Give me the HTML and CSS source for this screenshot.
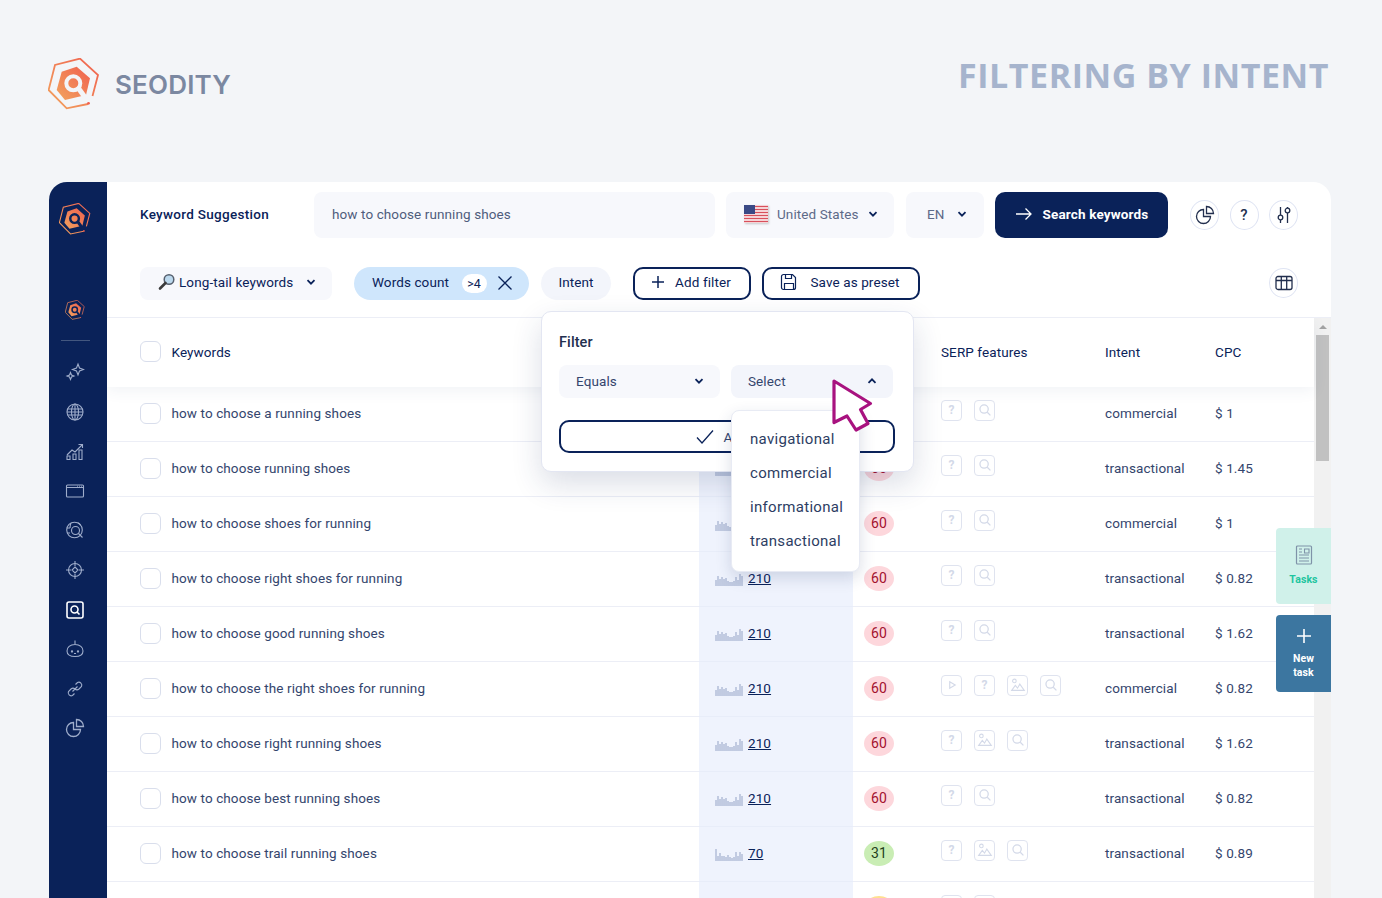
FILE: index.html
```html
<!DOCTYPE html>
<html lang="en">
<head>
  <meta charset="UTF-8" />
  <meta name="viewport" content="width=device-width, initial-scale=1.0"/>
  <title>Seodity - Filtering by intent</title>
  <link rel="stylesheet" href="styles.css">
</head>
<body>

  <svg class="defs" width="0" height="0">
    <defs>
      <linearGradient id="logoGrad" x1="0" y1="1" x2="1" y2="0">
        <stop offset="0" stop-color="#f2a35e"/>
        <stop offset="1" stop-color="#f0604f"/>
      </linearGradient>
      <symbol id="logo" viewBox="0 0 52 52">
        <path d="M40 46 18.7 50.3.6 32 7 7 32 .6 50 17l-5.500 21" fill="none" stroke="url(#logoGrad)" stroke-width="1.800"/>
        <path d="M28.700 8.700 42 20.300 38 37 17 42 8.700 32 13.700 13.700z" fill="url(#logoGrad)"/>
        <circle cx="25.300" cy="25.300" r="7" fill="none" stroke="var(--knock)" stroke-width="4"/>
        <path d="M31 31l6.500 9" stroke="var(--knock)" stroke-width="5"/>
        <circle cx="40.500" cy="45.300" r="1.400" fill="#f0604f"/>
      </symbol>
      <symbol id="chev" viewBox="0 0 10 10"><path d="M1.500 3.200 5 6.700l3.500-3.500" fill="none" stroke="currentColor" stroke-width="1.800"/></symbol>
      <symbol id="pie" viewBox="0 0 20 20"><path d="M8.500 4.500A7 7 0 1 0 15.500 11.500H8.500zM11.500 1.500a7 7 0 0 1 7 7h-7z" fill="none" stroke="currentColor" stroke-width="1.300"/></symbol>
      <symbol id="s-search" viewBox="0 0 20 20"><circle cx="9" cy="9" r="4.600" fill="none" stroke="currentColor" stroke-width="1.400"/><path d="M12.500 12.500l3.500 3.500" stroke="currentColor" stroke-width="1.400"/></symbol>
      <symbol id="s-image" viewBox="0 0 20 20"><circle cx="6" cy="5.500" r="2" fill="none" stroke="currentColor" stroke-width="1.200"/><path d="M3 16l4-5.500 2.500 3L12 9l5 7z" fill="none" stroke="currentColor" stroke-width="1.200"/></symbol>
      <symbol id="s-play" viewBox="0 0 20 20"><path d="M7.500 6.500v7l6-3.500z" fill="none" stroke="currentColor" stroke-width="1.300"/></symbol>
      <symbol id="spark-a" viewBox="0 0 28 12"><path d="M1 12V6M3 12V2M5 12V5M7 12V3M9 12V5M11 12V4M13 12V7M15 12V8M17 12V8M19 12V7M21 12V3M23 12V6M25 12V0M27 12V2" stroke="#94a3c6" stroke-width="1"/></symbol>
      <symbol id="spark-b" viewBox="0 0 28 12"><path d="M1 12V0M3 12V7M5 12V4M7 12V7M9 12V7M11 12V8M13 12V6M15 12V8M17 12V9M19 12V8M21 12V3M23 12V7M25 12V3M27 12V5" stroke="#94a3c6" stroke-width="1"/></symbol>
    </defs>
  </svg>

  <header class="page-head">
    <div class="brand">
      <svg class="brand-logo"><use href="#logo"/></svg>
      <span class="brand-name">SEODITY</span>
    </div>
    <h1 class="page-title">FILTERING BY INTENT</h1>
  </header>

  <div class="app">
    <nav class="sidebar">
      <svg class="side-logo"><use href="#logo"/></svg>
      <svg class="side-logo-small"><use href="#logo"/></svg>
      <div class="side-line"></div>
      <div class="side-icons">
        <svg viewBox="0 0 20 20"><path d="M13 2l1.500 4 4 1.500-4 1.500-1.500 4-1.500-4-4-1.500 4-1.500zM5.500 10.500l1 2.500 2.500 1-2.500 1-1 2.500-1-2.500-2.500-1 2.500-1z"/></svg>
        <svg viewBox="0 0 20 20"><circle cx="10" cy="10" r="8"/><ellipse cx="10" cy="10" rx="3.500" ry="8"/><path d="M10 2v16M2.500 7h15M2.500 13h15M2 10h16"/></svg>
        <svg viewBox="0 0 20 20"><path d="M2 14l5-5 3 2 7-7M13.500 3.500H17.500V7M2 15h3v3.500H2zM8 13h3v5.500H8zM14 9h3v9.500h-3z"/></svg>
        <svg viewBox="0 0 20 20"><rect x="1.500" y="4" width="17" height="12" rx="1"/><path d="M1.500 6.500h17M12 5.200h.8M14 5.200h.8M16 5.200h.8"/></svg>
        <svg viewBox="0 0 20 20"><circle cx="9.500" cy="10" r="7.800"/><path d="M2 8h3M2 13h3M6 3c-1 2-1 4-1 5M13 2.800c1 .6 2 1.500 2.500 2.500"/><circle cx="10.500" cy="10.500" r="4"/><path d="M13.500 13.500l4 4"/></svg>
        <svg viewBox="0 0 20 20"><circle cx="10" cy="10" r="6.500"/><path d="M10 7l3 3-3 3-3-3zM10 1v5M10 14v5M1 10h5M14 10h5"/></svg>
        <svg class="side-active" viewBox="0 0 20 20"><rect x="2" y="2" width="16" height="16" rx="2"/><circle cx="9.500" cy="9.500" r="3.500"/><path d="M12 12l2.500 2.500"/></svg>
        <svg viewBox="0 0 20 20"><path d="M10 1.500v4M10 5.500c5 0 8 3 8 6.500s-3 5.500-8 5.500-8-2-8-5.500 3-6.500 8-6.500z"/><circle cx="7" cy="12.500" r=".6"/><circle cx="13" cy="12.500" r=".6"/><path d="M9 14.500h2"/></svg>
        <svg viewBox="0 0 20 20"><path d="M7.500 12.500l5-5M10.500 5.500l2-2a3 3 0 0 1 4 4l-2.500 2.500a3 3 0 0 1-4 0M9.500 14.500l-2 2a3 3 0 0 1-4-4L6 10a3 3 0 0 1 4 0"/></svg>
        <svg viewBox="0 0 20 20"><use href="#pie"/></svg>
      </div>
    </nav>

    <main class="content">
      <section class="topbar">
        <div class="tool-name">Keyword Suggestion</div>
        <div class="query">how to choose running shoes</div>
        <div class="select country">
          <svg class="flag" viewBox="0 0 24 18">
            <rect width="24" height="18" fill="#fff"/>
            <path d="M0 1.500h24M0 4.500h24M0 7.500h24M0 10.500h24M0 13.500h24M0 16.500h24" stroke="#d8505c" stroke-width="1.500"/>
            <rect width="11" height="9" fill="#3b4a86"/>
          </svg>
          <span>United States</span>
          <svg class="chev"><use href="#chev"/></svg>
        </div>
        <div class="select lang">
          <span>EN</span>
          <svg class="chev"><use href="#chev"/></svg>
        </div>
        <button class="search-btn">
          <svg width="18" height="14" viewBox="0 0 18 14"><path d="M1 7h15M10.500 1.500 16 7l-5.500 5.500" fill="none" stroke="#fff" stroke-width="1.300"/></svg>
          Search keywords
        </button>
        <div class="round-btns">
          <div class="round-btn"><svg width="20" height="20"><use href="#pie"/></svg></div>
          <div class="round-btn">?</div>
          <div class="round-btn">
            <svg width="20" height="20" viewBox="0 0 20 20"><path d="M6.500 2v8M6.500 15v3M13.500 2v1M13.500 8v10" fill="none" stroke="currentColor" stroke-width="1.300"/><circle cx="6.500" cy="12.500" r="2.300" fill="none" stroke="currentColor" stroke-width="1.300"/><circle cx="13.500" cy="5.500" r="2.300" fill="none" stroke="currentColor" stroke-width="1.300"/></svg>
          </div>
        </div>
      </section>

      <section class="filterbar">
        <div class="select longtail">
          <svg width="18" height="18" viewBox="0 0 18 18"><circle cx="11" cy="6.500" r="4.800" fill="#bcd9ee" stroke="#56606e" stroke-width="1.500"/><path d="M7.500 10 2 15.500" stroke="#3b3b3b" stroke-width="2.600" stroke-linecap="round"/></svg>
          <span>Long-tail keywords</span>
          <svg class="chev"><use href="#chev"/></svg>
        </div>
        <div class="pill pill-blue">
          <span>Words count</span>
          <span class="pill-value">&gt;4</span>
          <svg width="16" height="16" viewBox="0 0 16 16"><path d="M1.500 1.500l13 13M14.500 1.500l-13 13" stroke="#0a2259" stroke-width="1.300"/></svg>
        </div>
        <div class="pill pill-grey">Intent</div>
        <button class="outline-btn add-btn">
          <svg width="14" height="14" viewBox="0 0 14 14"><path d="M7 1v12M1 7h12" stroke="#0a2259" stroke-width="1.500"/></svg>
          Add filter
        </button>
        <button class="outline-btn save-btn">
          <svg width="18" height="18" viewBox="0 0 18 18"><path d="M3.500 1.500h9l3 3v10a2 2 0 0 1-2 2h-10a2 2 0 0 1-2-2v-11a2 2 0 0 1 2-2zM5.500 1.500v4h6v-4M4.500 16.500v-6h9v6" fill="none" stroke="#0a2259" stroke-width="1.200"/></svg>
          Save as preset
        </button>
        <div class="round-btn grid-btn">
          <svg width="18" height="18" viewBox="0 0 18 18"><rect x="1" y="2.500" width="16" height="13" rx="2" fill="none" stroke="currentColor" stroke-width="1.300"/><path d="M1 6.500h16M6.300 2.500v13M11.700 2.500v13" stroke="currentColor" stroke-width="1.300"/></svg>
        </div>
      </section>

      <section class="table-area">
        <div class="table">
          <div class="row head">
            <div class="kw"><span class="check"></span>Keywords</div>
            <div></div>
            <div></div>
            <div>SERP features</div>
            <div>Intent</div>
            <div>CPC</div>
          </div>

          <div class="row">
            <div class="kw"><span class="check"></span>how to choose a running shoes</div>
            <div class="vol"><svg class="spark"><use href="#spark-a"/></svg><a>210</a></div>
            <div><span class="kd red">60</span></div>
            <div class="serp"><span class="si">?</span><span class="si"><svg><use href="#s-search"/></svg></span></div>
            <div class="intent">commercial</div>
            <div class="cpc">$ 1</div>
          </div>
          <div class="row">
            <div class="kw"><span class="check"></span>how to choose running shoes</div>
            <div class="vol"><svg class="spark"><use href="#spark-a"/></svg><a>210</a></div>
            <div><span class="kd red">60</span></div>
            <div class="serp"><span class="si">?</span><span class="si"><svg><use href="#s-search"/></svg></span></div>
            <div class="intent">transactional</div>
            <div class="cpc">$ 1.45</div>
          </div>
          <div class="row">
            <div class="kw"><span class="check"></span>how to choose shoes for running</div>
            <div class="vol"><svg class="spark"><use href="#spark-a"/></svg><a>210</a></div>
            <div><span class="kd red">60</span></div>
            <div class="serp"><span class="si">?</span><span class="si"><svg><use href="#s-search"/></svg></span></div>
            <div class="intent">commercial</div>
            <div class="cpc">$ 1</div>
          </div>
          <div class="row">
            <div class="kw"><span class="check"></span>how to choose right shoes for running</div>
            <div class="vol"><svg class="spark"><use href="#spark-a"/></svg><a>210</a></div>
            <div><span class="kd red">60</span></div>
            <div class="serp"><span class="si">?</span><span class="si"><svg><use href="#s-search"/></svg></span></div>
            <div class="intent">transactional</div>
            <div class="cpc">$ 0.82</div>
          </div>
          <div class="row">
            <div class="kw"><span class="check"></span>how to choose good running shoes</div>
            <div class="vol"><svg class="spark"><use href="#spark-a"/></svg><a>210</a></div>
            <div><span class="kd red">60</span></div>
            <div class="serp"><span class="si">?</span><span class="si"><svg><use href="#s-search"/></svg></span></div>
            <div class="intent">transactional</div>
            <div class="cpc">$ 1.62</div>
          </div>
          <div class="row">
            <div class="kw"><span class="check"></span>how to choose the right shoes for running</div>
            <div class="vol"><svg class="spark"><use href="#spark-a"/></svg><a>210</a></div>
            <div><span class="kd red">60</span></div>
            <div class="serp"><span class="si"><svg><use href="#s-play"/></svg></span><span class="si">?</span><span class="si"><svg><use href="#s-image"/></svg></span><span class="si"><svg><use href="#s-search"/></svg></span></div>
            <div class="intent">commercial</div>
            <div class="cpc">$ 0.82</div>
          </div>
          <div class="row">
            <div class="kw"><span class="check"></span>how to choose right running shoes</div>
            <div class="vol"><svg class="spark"><use href="#spark-a"/></svg><a>210</a></div>
            <div><span class="kd red">60</span></div>
            <div class="serp"><span class="si">?</span><span class="si"><svg><use href="#s-image"/></svg></span><span class="si"><svg><use href="#s-search"/></svg></span></div>
            <div class="intent">transactional</div>
            <div class="cpc">$ 1.62</div>
          </div>
          <div class="row">
            <div class="kw"><span class="check"></span>how to choose best running shoes</div>
            <div class="vol"><svg class="spark"><use href="#spark-a"/></svg><a>210</a></div>
            <div><span class="kd red">60</span></div>
            <div class="serp"><span class="si">?</span><span class="si"><svg><use href="#s-search"/></svg></span></div>
            <div class="intent">transactional</div>
            <div class="cpc">$ 0.82</div>
          </div>
          <div class="row">
            <div class="kw"><span class="check"></span>how to choose trail running shoes</div>
            <div class="vol"><svg class="spark"><use href="#spark-b"/></svg><a>70</a></div>
            <div><span class="kd green">31</span></div>
            <div class="serp"><span class="si">?</span><span class="si"><svg><use href="#s-image"/></svg></span><span class="si"><svg><use href="#s-search"/></svg></span></div>
            <div class="intent">transactional</div>
            <div class="cpc">$ 0.89</div>
          </div>
          <div class="row">
            <div class="kw"></div>
            <div class="vol"></div>
            <div><span class="kd yellow"></span></div>
            <div class="serp"><span class="si"></span><span class="si"></span></div>
            <div class="intent"></div>
            <div class="cpc"></div>
          </div>
        </div>

        <div class="scrollbar">
          <div class="scroll-up"></div>
          <div class="scroll-thumb"></div>
        </div>
      </section>
    </main>

    <!-- filter popup sits over the table -->
    <div class="popup">
      <div class="popup-title">Filter</div>
      <div class="popup-selects">
        <div class="select popup-select"><span>Equals</span><svg class="chev"><use href="#chev"/></svg></div>
        <div class="select popup-select open"><span>Select</span><svg class="chev chev-up"><use href="#chev"/></svg></div>
      </div>
      <button class="apply-btn">
        <svg width="18" height="16" viewBox="0 0 18 16"><path d="M1 8.500 6 14 17 1.500" fill="none" stroke="#0a2259" stroke-width="1.300"/></svg>
        Apply
      </button>
      <ul class="dropdown">
        <li>navigational</li>
        <li>commercial</li>
        <li>informational</li>
        <li>transactional</li>
      </ul>
    </div>

    <svg class="cursor" width="44" height="54" viewBox="0 0 44 54">
      <path d="M2 2 38.500 24.500 28.500 30.500 36 44.500 24 51 15 37 2 43.500z" fill="#fff" stroke="#a8127f" stroke-width="3.200" stroke-linejoin="round"/>
    </svg>

    <div class="side-tab tasks">
      <svg width="18" height="20" viewBox="0 0 18 20"><rect x="1.500" y="1" width="15" height="18" rx="1" fill="none" stroke="#7f93a8" stroke-width="1.200"/><path d="M9.500 4h4.500v4H9.500zM4 10h10M4 13h10M4 16h10M4 4h3M4 7h3" fill="none" stroke="#7f93a8" stroke-width="1.100"/></svg>
      <span>Tasks</span>
    </div>
    <div class="side-tab new-task">
      <svg width="14" height="14" viewBox="0 0 14 14"><path d="M7 0v14M0 7h14" stroke="#fff" stroke-width="1.600"/></svg>
      <span>New<br>task</span>
    </div>
  </div>

</body>
</html>
```
FILE: styles.css
```css
* {
  margin: 0;
  padding: 0;
  box-sizing: border-box;
}

html, body {
  height: 898px;
  overflow: hidden;
}

body {
  background: #f3f5f8;
  font-family: Roboto, 'Liberation Sans', sans-serif;
  font-size: 13.5px;
  letter-spacing: 0.1px;
  color: #0a2259;
}

button {
  font-family: inherit;
  letter-spacing: inherit;
  cursor: pointer;
}

.defs {
  display: block;
  height: 0;
}

/* page header */
.page-head {
  height: 182px;
  padding: 57px 53px 0 48px;
  display: flex;
  justify-content: space-between;
  align-items: flex-start;
  --knock: #f3f5f8;
}

.brand {
  display: flex;
  align-items: center;
  gap: 15px;
  margin-top: 1px;
}

.brand-logo {
  width: 52px;
  height: 52px;
}

.brand-name {
  font-family: Inter, sans-serif;
  font-size: 26px;
  font-weight: 600;
  letter-spacing: 0.2px;
  color: #7b88a1;
}

.page-title {
  font-family: 'Open Sans', sans-serif;
  font-size: 34px;
  font-weight: 700;
  letter-spacing: 0.55px;
  line-height: 36px;
  color: #a6b4cd;
}

/* app window */
.app {
  position: relative;
  margin: 0 51px 0 49px;
  height: 716px;
  display: flex;
  background: #fff;
  border-radius: 18px 18px 0 0;
  overflow: hidden;
}

.sidebar {
  width: 58px;
  flex-shrink: 0;
  padding-right: 6px;
  background: #0a2259;
  display: flex;
  flex-direction: column;
  align-items: center;
  --knock: #0a2259;
}

.side-logo {
  width: 32px;
  height: 32px;
  margin-top: 21px;
}

.side-logo-small {
  width: 20px;
  height: 20px;
  margin-top: 65px;
}

.side-line {
  width: 29px;
  height: 1px;
  background: #43577f;
  margin-top: 20px;
}

.side-icons {
  display: flex;
  flex-direction: column;
  gap: 19.600px;
  margin-top: 21px;
}

.side-icons svg {
  display: block;
  width: 20px;
  height: 20px;
  fill: none;
  stroke: #9fadcb;
  stroke-width: 1.100;
  color: #9fadcb;
}

.side-icons .side-active {
  stroke: #fff;
  stroke-width: 1.600;
}

.content {
  flex: 1;
  min-width: 0;
  display: flex;
  flex-direction: column;
}

/* top bar */
.topbar {
  height: 68px;
  padding: 10px 33px 0;
  display: flex;
  align-items: flex-start;
}

.tool-name {
  width: 174px;
  height: 46px;
  line-height: 44px;
  font-weight: 500;
  letter-spacing: 0.3px;
}

.query {
  width: 401px;
  height: 46px;
  line-height: 44px;
  padding-left: 18px;
  background: #f7f8fc;
  border-radius: 8px;
  color: #4f5d7c;
}

.select {
  display: flex;
  align-items: center;
  background: #f7f8fc;
  border-radius: 8px;
}

.chev {
  width: 10px;
  height: 10px;
  color: #0a2259;
  flex-shrink: 0;
}

.chev-up {
  transform: rotate(180deg);
}

.country {
  width: 168px;
  height: 46px;
  margin-left: 11px;
  padding: 0 16px 2px 18px;
  color: #5d6a88;
}

.flag {
  width: 24px;
  height: 18px;
  margin-right: 9px;
  box-shadow: 1px 1px 2px rgba(0, 0, 0, 0.2);
}

.country .chev {
  margin-left: auto;
}

.lang {
  width: 78px;
  height: 46px;
  margin-left: 12px;
  padding: 0 17px 2px 21px;
  justify-content: space-between;
  color: #5d6a88;
}

.search-btn {
  width: 173px;
  height: 46px;
  margin-left: 11px;
  padding-bottom: 2px;
  background: #0a2259;
  border: none;
  border-radius: 10px;
  color: #fff;
  font-size: 13.5px;
  font-weight: 700;
  letter-spacing: 0.15px;
  display: flex;
  align-items: center;
  justify-content: center;
  gap: 10px;
}

.round-btns {
  display: flex;
  gap: 10.500px;
  margin: 8px 0 0 22px;
}

.round-btn {
  width: 29px;
  height: 30px;
  border: 1px solid #dfe4f3;
  border-radius: 50%;
  display: flex;
  align-items: center;
  justify-content: center;
  font-size: 15px;
  font-weight: 500;
  color: #222f4e;
}

/* filter row */
.filterbar {
  height: 68px;
  padding: 17px 33px 0;
  display: flex;
  align-items: flex-start;
  border-bottom: 1px solid #eceef6;
}

.longtail {
  width: 192px;
  height: 33px;
  padding: 0 16px 3px 18px;
  gap: 3px;
}

.longtail .chev {
  margin-left: auto;
}

.pill {
  height: 33px;
  padding-bottom: 3px;
  border-radius: 17px;
  display: flex;
  align-items: center;
}

.pill-blue {
  width: 175px;
  margin-left: 22px;
  padding-left: 18px;
  background: #cfe6fc;
}

.pill-value {
  width: 25px;
  height: 19px;
  line-height: 19px;
  margin: 2px 10px 0 12.500px;
  text-align: center;
  background: #fff;
  border-radius: 10px;
  font-size: 12.500px;
}

.pill-blue svg {
  margin-top: 2px;
}

.pill-grey {
  width: 70px;
  margin-left: 12px;
  justify-content: center;
  background: #f3f5fb;
}

.outline-btn {
  height: 33px;
  padding: 0 2px 3px 0;
  background: #fff;
  border: 2px solid #0a2259;
  border-radius: 10px;
  color: #0a2259;
  font-size: 13.5px;
  display: flex;
  align-items: center;
  justify-content: center;
}

.add-btn {
  width: 118px;
  margin-left: 22px;
  gap: 10px;
}

.save-btn {
  width: 158px;
  margin-left: 11px;
  gap: 12px;
}

.grid-btn {
  margin-left: auto;
  margin-top: 1px;
}

/* table */
.table-area {
  flex: 1;
  min-height: 0;
  display: flex;
  overflow: hidden;
}

.table {
  flex: 1;
  min-width: 0;
}

.row {
  display: grid;
  grid-template-columns: 592px 154px 88px 164px 110px 1fr;
  height: 55px;
  border-bottom: 1px solid #eceef6;
  align-items: center;
  color: #34456d;
}

.row > div {
  height: 100%;
  padding-bottom: 2px;
  display: flex;
  align-items: center;
}

.head {
  height: 69px;
  border-bottom: none;
  color: #0a2259;
  position: relative;
  box-shadow: 0 4px 14px rgba(60, 80, 130, 0.07);
}

.kw {
  padding-left: 33px;
}

.check {
  width: 21px;
  height: 21px;
  border: 1px solid #d9deec;
  border-radius: 6px;
  margin-right: 10.500px;
  background: #fff;
}

.vol {
  padding-left: 16px;
  background: #eff3fd;
  box-shadow: 0 1px 0 #e8edf9;
}

.spark {
  width: 28px;
  height: 12px;
  margin: 3px 5px 0 0;
}

.vol a {
  color: #0a2259;
  text-decoration: underline;
  font-size: 13.5px;
}

.row > div:nth-child(3) {
  padding-left: 11px;
}

.kd {
  width: 30px;
  height: 25px;
  line-height: 25px;
  border-radius: 50%;
  text-align: center;
  font-size: 14px;
}

.red {
  background: #fdd7dc;
  color: #a3122f;
}

.green {
  background: #c9edb4;
  color: #24401b;
}

.yellow {
  background: #ffe08f;
}

.row > .serp {
  gap: 12px;
  padding-bottom: 8px;
}

.si {
  width: 21px;
  height: 21px;
  border: 1.500px solid #dfe3ef;
  border-radius: 4px;
  display: flex;
  align-items: center;
  justify-content: center;
  font-size: 12px;
  font-weight: 700;
  color: #d3d9e8;
}

.si svg {
  width: 18px;
  height: 18px;
}

/* scrollbar */
.scrollbar {
  width: 17px;
  flex-shrink: 0;
  background: #f1f1f1;
  padding: 7px 2px 0;
}

.scroll-up {
  width: 0;
  height: 0;
  margin: 0 auto 6px;
  border-left: 4px solid transparent;
  border-right: 4px solid transparent;
  border-bottom: 4px solid #a3a3a3;
}

.scroll-thumb {
  height: 126px;
  background: #c1c1c1;
}

/* popup */
.popup {
  position: absolute;
  left: 492px;
  top: 129px;
  width: 373px;
  height: 161px;
  padding: 22px 17px 0;
  background: #fff;
  border: 1px solid #e3e6f2;
  border-radius: 10px;
  box-shadow: 0 12px 30px rgba(30, 50, 100, 0.16);
}

.popup-title {
  font-size: 14.500px;
  font-weight: 500;
  color: #222f4e;
}

.popup-selects {
  display: flex;
  gap: 11px;
  margin-top: 14px;
}

.popup-select {
  width: 161px;
  height: 33px;
  padding: 0 16px 2px 17px;
  justify-content: space-between;
  color: #34456d;
}

.open {
  width: 162px;
  background: #f3f5fb;
}

.apply-btn {
  width: 336px;
  height: 33px;
  margin-top: 22px;
  background: #fff;
  border: 2px solid #0a2259;
  border-radius: 10px;
  color: #34456d;
  font-size: 13.5px;
  display: flex;
  align-items: center;
  justify-content: center;
  gap: 9px;
}

.dropdown {
  position: absolute;
  left: 189px;
  top: 98px;
  width: 129px;
  height: 162px;
  padding: 11px 0 0 18px;
  list-style: none;
  background: #fff;
  border: 1px solid #e8ebf4;
  border-radius: 8px;
  box-shadow: 0 6px 16px rgba(30, 50, 100, 0.16);
}

.dropdown li {
  height: 34px;
  line-height: 34px;
  font-size: 15px;
  letter-spacing: 0.3px;
  color: #2d3d63;
}

.cursor {
  position: absolute;
  left: 783px;
  top: 197px;
}

/* tabs on the right edge */
.side-tab {
  position: absolute;
  right: 0;
  width: 55px;
  border-radius: 4px 0 0 4px;
  display: flex;
  flex-direction: column;
  align-items: center;
  font-size: 10.500px;
  font-weight: 700;
  text-align: center;
}

.tasks {
  top: 346px;
  height: 76px;
  padding-top: 17px;
  gap: 8px;
  background: #d0f1ea;
  color: #1fc59f;
}

.new-task {
  top: 433px;
  height: 77px;
  padding-top: 14px;
  gap: 9px;
  background: #3c76a0;
  color: #fff;
  line-height: 14px;
}
```
